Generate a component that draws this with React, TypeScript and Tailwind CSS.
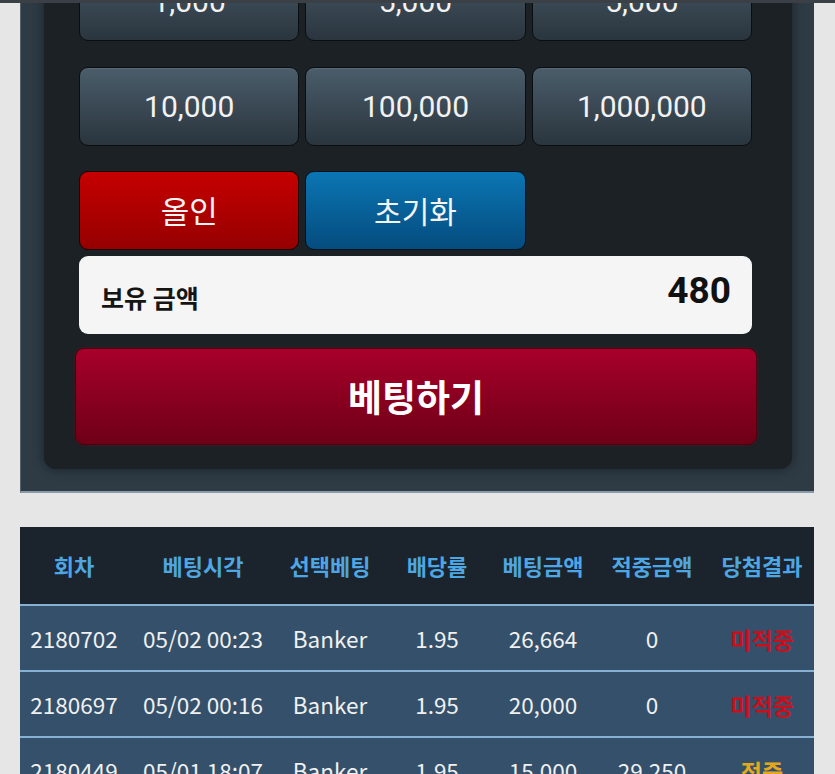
import React from "react";

const amounts1 = ["1,000", "5,000", "5,000"];
const amounts2 = ["10,000", "100,000", "1,000,000"];

const rows = [
  { id: "2180702", time: "05/02 00:23", pick: "Banker", odds: "1.95", bet: "26,664", win: "0", res: "미적중", hit: false },
  { id: "2180697", time: "05/02 00:16", pick: "Banker", odds: "1.95", bet: "20,000", win: "0", res: "미적중", hit: false },
  { id: "2180449", time: "05/01 18:07", pick: "Banker", odds: "1.95", bet: "15,000", win: "29,250", res: "적중", hit: true },
];

const headers = ["회차", "베팅시각", "선택베팅", "배당률", "베팅금액", "적중금액", "당첨결과"];

function AmountButton({ label }: { label: string }) {
  return (
    <button className="h-[79px] rounded-[9px] border border-[#0b0e10] bg-gradient-to-b from-[#4b5d6b] to-[#2a353e] text-[30px] text-[#f2f2f2] [font-family:Roboto,'Noto_Sans_CJK_KR',sans-serif] shadow-[inset_0_1px_0_rgba(255,255,255,0.08)]">
      {label}
    </button>
  );
}

export default function App() {
  const kr = "[font-family:'Noto_Sans_CJK_KR',sans-serif]";
  return (
    <div className="min-h-[774px] w-[835px] overflow-hidden bg-[#e6e6e6] relative">
      <div className="absolute left-0 top-0 z-10 h-[3px] w-full bg-[#3b4047]" />
      <div className="-mt-[38px] ml-[20px] w-[794px] border-l border-[#55636f] border-b-[2px] border-b-[#8a9aa8] bg-[#2e3b45] pb-[22px]">
        <div className="ml-[23px] w-[748px] rounded-b-[12px] bg-[#1b2125] pl-[35px] pr-[40px] pb-[24px] shadow-[0_0_12px_rgba(0,0,0,0.45)]">
          <div className="flex w-[673px] flex-col">
            <div className="grid grid-cols-3 gap-[6px]">
              {amounts1.map((a, i) => (
                <AmountButton key={i} label={a} />
              ))}
            </div>
            <div className="mt-[26px] grid grid-cols-3 gap-[6px]">
              {amounts2.map((a, i) => (
                <AmountButton key={i} label={a} />
              ))}
            </div>
            <div className="mt-[25px] grid grid-cols-3 gap-[6px]">
              <button className={`h-[79px] rounded-[9px] border border-[#1e0000] bg-gradient-to-b from-[#c60000] to-[#960000] text-[31px] text-[#f4f4f4] ${kr}`}>
                올인
              </button>
              <button className={`h-[79px] rounded-[9px] border border-[#02121e] bg-gradient-to-b from-[#0b76b4] to-[#054c7e] text-[30px] text-[#f4f4f4] ${kr}`}>
                초기화
              </button>
            </div>
            <div className="mt-[6px] flex h-[78px] items-center justify-between rounded-[9px] bg-[#f5f5f5] pl-[22px] pr-[21px]">
              <span className={`mt-[6px] text-[25px] font-bold text-[#151515] ${kr}`}>보유 금액</span>
              <span className="mt-[-8px] text-[37px] font-bold text-[#111] [font-family:Roboto,sans-serif]">480</span>
            </div>
            <button className={`-ml-[4px] mt-[14px] h-[97px] w-[682px] rounded-[9px] border border-[#4e0010] bg-gradient-to-b from-[#a8002a] to-[#6e0016] text-[37px] font-bold text-white ${kr} shadow-[0_0_3px_rgba(160,0,30,0.5)]`}>
              베팅하기
            </button>
          </div>
        </div>
      </div>

      <div className={`ml-[20px] mt-[34px] w-[794px] ${kr}`}>
        <div className="grid h-[77px] grid-cols-[108px_150px_104px_110px_102px_116px_104px] items-center bg-[#1b242c] text-[22px] font-bold text-[#4ea6e2]">
          {headers.map((h) => (
            <div key={h} className="text-center">
              {h}
            </div>
          ))}
        </div>
        {rows.map((r) => (
          <div
            key={r.id}
            className="grid h-[66px] grid-cols-[108px_150px_104px_110px_102px_116px_104px] items-center border-t-[2px] border-[#86b1d2] bg-[#34506a] pt-[2px] text-[22.5px] text-[#f0f0f0]"
          >
            <div className="text-center">{r.id}</div>
            <div className="text-center">{r.time}</div>
            <div className="text-center">{r.pick}</div>
            <div className="text-center">{r.odds}</div>
            <div className="text-center">{r.bet}</div>
            <div className="text-center">{r.win}</div>
            <div className={`text-center text-[23px] font-bold ${r.hit ? "text-[#e3a81e]" : "text-[#c8101c]"}`}>{r.res}</div>
          </div>
        ))}
      </div>
    </div>
  );
}
